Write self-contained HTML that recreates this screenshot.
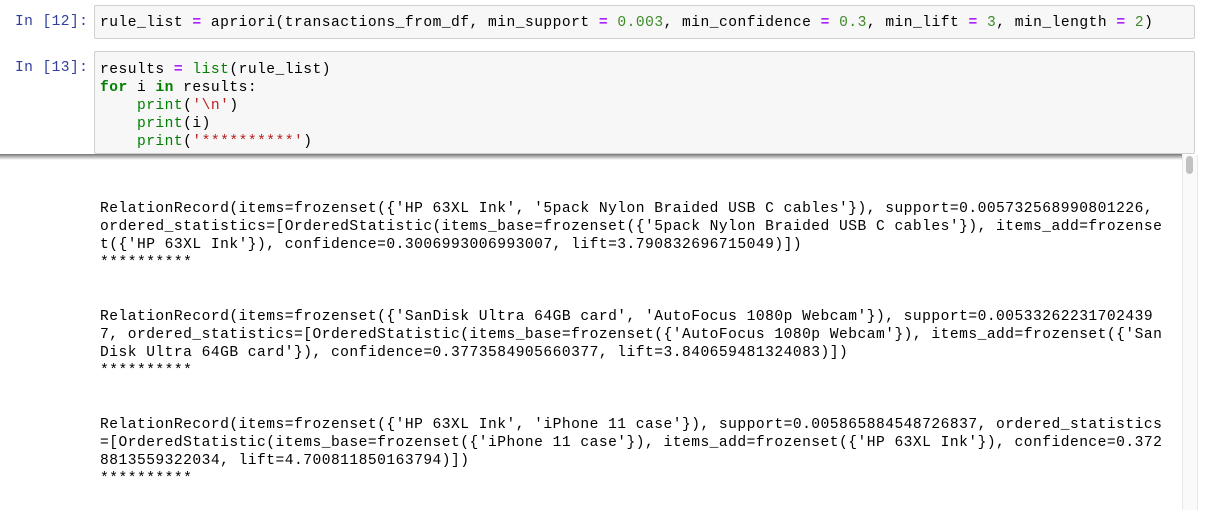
<!DOCTYPE html>
<html><head><style>
body{margin:0;width:1208px;height:510px;background:#fff;overflow:hidden;position:relative;font-family:"Liberation Mono",monospace;}
.m{font-family:"Liberation Mono",monospace;font-size:14.6px;letter-spacing:0.48px;white-space:pre;color:#000;}
.p{position:absolute;left:15px;color:#303f9f;font-size:14.6px;letter-spacing:0.4px;}
.box{position:absolute;left:94px;width:1101px;background:#f7f7f7;border:1px solid #cfcfcf;border-radius:2px;box-sizing:border-box;}
.code{position:absolute;left:5px;line-height:18px;}
.o{color:#aa22ff;font-weight:bold}.n{color:#3c8a28}.k{color:#008000;font-weight:bold}.b{color:#008000}.s{color:#ba2121}
.out{position:absolute;left:100px;line-height:18px;}
</style></head><body>
<div class="p m" style="top:14px">In [12]:</div>
<div class="box" style="top:5px;height:34px"><div class="code m" style="top:8px">rule_list <span class="o">=</span> apriori(transactions_from_df, min_support <span class="o">=</span> <span class="n">0.003</span>, min_confidence <span class="o">=</span> <span class="n">0.3</span>, min_lift <span class="o">=</span> <span class="n">3</span>, min_length <span class="o">=</span> <span class="n">2</span>)</div></div>
<div class="p m" style="top:60px">In [13]:</div>
<div class="box" style="top:51px;height:103px"><div class="code m" style="top:9px">results <span class="o">=</span> <span class="b">list</span>(rule_list)
<span class="k">for</span> i <span class="k">in</span> results:
    <span class="b">print</span>(<span class="s">'\n'</span>)
    <span class="b">print</span>(i)
    <span class="b">print</span>(<span class="s">'**********'</span>)</div></div>
<div style="position:absolute;left:0;top:154px;width:1182px;height:6px;background:linear-gradient(#777,#fff);"></div>
<div style="position:absolute;left:1182px;top:155px;width:14px;height:355px;background:#fafafa;border-left:1px solid #e8e8e8;border-right:1px solid #e8e8e8;"></div>
<div style="position:absolute;left:1186px;top:156px;width:7px;height:18px;background:#c1c1c1;border-radius:4px;"></div>
<div class="out m" style="top:200px">RelationRecord(items=frozenset({'HP 63XL Ink', '5pack Nylon Braided USB C cables'}), support=0.005732568990801226,
ordered_statistics=[OrderedStatistic(items_base=frozenset({'5pack Nylon Braided USB C cables'}), items_add=frozense
t({'HP 63XL Ink'}), confidence=0.3006993006993007, lift=3.790832696715049)])
**********</div>
<div class="out m" style="top:308px">RelationRecord(items=frozenset({'SanDisk Ultra 64GB card', 'AutoFocus 1080p Webcam'}), support=0.00533262231702439
7, ordered_statistics=[OrderedStatistic(items_base=frozenset({'AutoFocus 1080p Webcam'}), items_add=frozenset({'San
Disk Ultra 64GB card'}), confidence=0.3773584905660377, lift=3.840659481324083)])
**********</div>
<div class="out m" style="top:416px">RelationRecord(items=frozenset({'HP 63XL Ink', 'iPhone 11 case'}), support=0.005865884548726837, ordered_statistics
=[OrderedStatistic(items_base=frozenset({'iPhone 11 case'}), items_add=frozenset({'HP 63XL Ink'}), confidence=0.372
8813559322034, lift=4.700811850163794)])
**********</div>
</body></html>
